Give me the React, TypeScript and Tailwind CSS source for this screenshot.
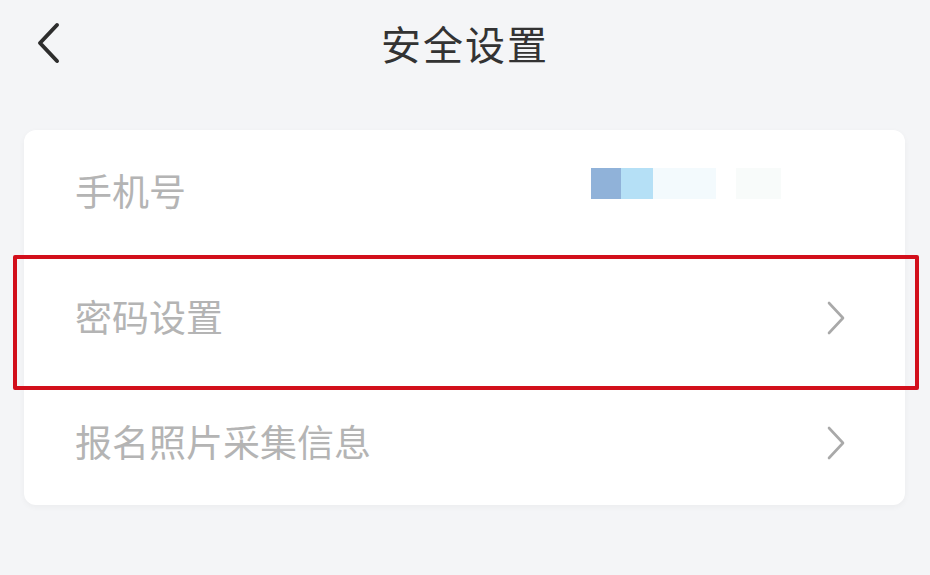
import React from "react";

const font = { fontFamily: '"Noto Sans CJK SC", "Noto Sans", sans-serif' };

function Chevron() {
  return (
    <svg width="24" height="36" viewBox="0 0 24 36" className="shrink-0">
      <polyline points="5,3 19,18 5,33" fill="none" stroke="#a9a9a9" strokeWidth="2.6" strokeLinecap="round" strokeLinejoin="round" />
    </svg>
  );
}

export default function App() {
  return (
    <div className="w-[930px] h-[575px] bg-[#f4f5f7] overflow-hidden" style={font}>
      <div className="relative h-[90px] flex items-center justify-center">
        <svg width="30" height="44" viewBox="0 0 30 44" className="absolute left-[34px] top-[21px]">
          <polyline points="23,4 6,22 23,40" fill="none" stroke="#2d2d2d" strokeWidth="4" strokeLinecap="round" strokeLinejoin="round" />
        </svg>
        <span className="text-[40px] leading-none text-[#333] tracking-[2px] mb-[4px]">安全设置</span>
      </div>
      <div className="mt-[40px] mx-[24px] w-[881px] bg-white rounded-[12px] shadow-[0_2px_6px_rgba(0,0,0,0.04)]">
        <div className="h-[125px] flex items-center pl-[51px] pr-[57px]">
          <span className="text-[37px] leading-none text-[#b4b4b4] flex-1 mb-[4px]">手机号</span>
          <div className="flex items-center h-[30px] mr-[67px] mb-[18px]">
            <div className="w-[30px] h-[31px] bg-[#90b2d9]" />
            <div className="w-[32px] h-[31px] bg-[#b5e0f6]" />
            <div className="w-[63px] h-[31px] bg-[#f3fafd]" />
            <div className="w-[20px] h-[31px] bg-white" />
            <div className="w-[45px] h-[31px] bg-[#f8fbfa]" />
          </div>
        </div>
        <div className="relative h-[125px] flex items-center pl-[51px] pr-[57px]">
          <span className="text-[37px] leading-none text-[#b4b4b4] flex-1 mb-[2px]">密码设置</span>
          <Chevron />
          <div className="absolute left-[-11px] right-[-14px] top-0 bottom-[-10px] border-[4px] border-[#d20f1b] rounded-[2px]" />
        </div>
        <div className="h-[125px] flex items-center pl-[51px] pr-[57px]">
          <span className="text-[37px] leading-none text-[#b4b4b4] flex-1 mb-[2px]">报名照片采集信息</span>
          <Chevron />
        </div>
      </div>
    </div>
  );
}
